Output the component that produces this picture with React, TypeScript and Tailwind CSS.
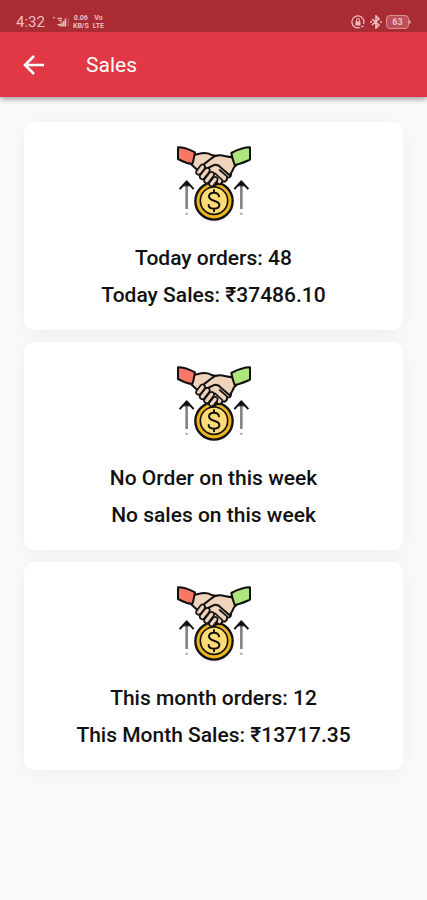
type Summary = {
  id: string;
  orders: string;
  sales: string;
};

const summaries: Summary[] = [
  { id: "today", orders: "Today orders: 48", sales: "Today Sales: ₹37486.10" },
  { id: "week", orders: "No Order on this week", sales: "No sales on this week" },
  { id: "month", orders: "This month orders: 12", sales: "This Month Sales: ₹13717.35" },
];

function DealIcon() {
  return (
    <svg
      viewBox="36 31 222 225"
      className="h-[75px] w-[74px]"
      fill="none"
      stroke="#111"
      strokeWidth="6"
      strokeLinecap="round"
      strokeLinejoin="round"
      aria-hidden="true"
    >
      {/* coin */}
      <circle cx="147" cy="196" r="56" fill="#eeb41e" strokeWidth="7" />
      <circle cx="147" cy="195" r="41" fill="#ffdc73" strokeWidth="5" />
      <path d="M162 182c-1-7-7-11-15-11-9 0-15 4-15 11 0 8 7 11 15 13s16 5 16 13c0 7-7 11-16 11s-16-4-16-11M147 164v7M147 219v8" strokeWidth="6" />
      {/* arrows */}
      <path d="M65 145v75M229 145v75" stroke="#858585" strokeWidth="8" strokeLinecap="butt" />
      <path d="M65 231v6M229 231v6" stroke="#aaa" strokeWidth="7" strokeLinecap="butt" />
      <path d="M46 158l19-21 19 21M210 158l19-21 19 21" strokeLinecap="square" />
      <path d="M54 150l11-13 11 13zM218 150l11-13 11 13z" fill="#111" strokeWidth="2" />
      {/* left hand */}
      <path d="M86 58c11-2 20-6 34-6 9 0 16 3 22 7l22 3 32 48c6 8 0 18-10 15 2 9-7 16-14 11 0 9-10 13-17 7-2 9-12 11-18 5L97 103 80 87z" fill="#efd3bb" />
      {/* right hand */}
      <path d="M201 64c-14 0-23-5-37-5-12 0-20 5-27 11l-17 13c-8 7-1 18 9 14l16-8c9-4 17 0 23 7l26 23c6-8 9-14 13-24l7-6z" fill="#efd3bb" />
      <path d="M187 123l-23-20M172 133l-22-20M157 140l-14-14" strokeWidth="5" />
      {/* fingers */}
      <path d="M95 105l11-15c7-8 19 0 12 10l-11 14c-7 8-18-1-12-9z" fill="#efd3bb" strokeWidth="5" />
      <path d="M106 118l14-18c7-8 19 0 12 10l-14 18c-7 8-18-2-12-10z" fill="#efd3bb" strokeWidth="5" />
      <path d="M119 130l14-18c7-8 19 0 12 10l-14 18c-7 8-18-2-12-10z" fill="#efd3bb" strokeWidth="5" />
      <path d="M134 140l10-13c7-8 18 0 12 9l-10 13c-7 8-18-1-12-9z" fill="#efd3bb" strokeWidth="5" />
      {/* cuffs */}
      <path d="M39 35c18 0 34 6 51 15-3 12-3 22-8 35-14 0-28-7-43-15z" fill="#fa7665" />
      <path d="M255 35c-20 0-37 7-56 17 2 12 5 22 10 36 15-2 30-9 46-16z" fill="#aee57d" />
    </svg>
  );
}

function StatusBar() {
  return (
    <div className="flex h-8 items-end justify-between bg-[#a92b34] px-4 pb-[2px] text-[#f0bfc0]">
      <div className="flex items-center gap-2">
        <span className="text-[15px] leading-4">4:32</span>
        <div className="flex items-center gap-1">
          <svg viewBox="0 0 18 14" className="h-[14px] w-4" fill="none" stroke="currentColor" aria-hidden="true">
            <path d="M0 2h2M5 3h5M6 5h4M8 7h2M5 10h3" strokeWidth="1.3" />
            <path d="M8 12V9M10 12V8M12 12V6M14 12V3" strokeWidth="1.7" />
            <path d="M17 3v9" opacity=".5" />
          </svg>
          <div className="flex flex-col items-center text-[7px] leading-[8px] font-bold">
            <span>0.06</span>
            <span>KB/S</span>
          </div>
          <div className="flex flex-col items-center text-[7px] leading-[8px] font-bold">
            <span>Vo</span>
            <span>LTE</span>
          </div>
        </div>
      </div>
      <div className="flex items-center gap-1 pb-px">
        <svg viewBox="0 0 14 14" className="mr-px size-[14px]" fill="none" stroke="currentColor" aria-hidden="true">
          <path d="M9 12.5A6 6 0 1 1 12.5 9" strokeWidth="1.3" />
          <rect x="4.5" y="6.5" width="5" height="4" fill="currentColor" stroke="none" />
          <path d="M5.5 7V5a1.5 1.5 0 0 1 3 0v2M10 12l3-1" />
        </svg>
        <svg viewBox="0 0 12 14" className="h-[14px] w-3" fill="none" stroke="currentColor" strokeWidth="1.6" aria-hidden="true">
          <path d="M2 4l7 6-3 3V1l3 3-7 6M0 7h2M10 7h2" />
        </svg>
        <div className="flex items-center">
          <span className="flex h-[14px] w-[23px] items-center justify-center rounded-[4px] border border-[#dc8e93] bg-[#bc5059] text-[9px] leading-none font-bold">
            63
          </span>
          <span className="h-1 w-[2px] rounded-r-sm bg-[#dc8e93]" />
        </div>
      </div>
    </div>
  );
}

function SummaryCard({ orders, sales }: Summary) {
  return (
    <section className="flex flex-col items-center rounded-[10px] bg-white px-4 pt-6 pb-4 shadow-[0_3px_22px_rgba(0,0,0,0.05)]">
      <DealIcon />
      <div className="mt-[19px] text-center text-[21px] leading-[37px] font-medium text-[#111]">
        <p>{orders}</p>
        <p>{sales}</p>
      </div>
    </section>
  );
}

export default function App() {
  return (
    <div className="min-h-screen bg-[#fafafa] font-[Roboto,'Noto_Sans',sans-serif]">
      <header className="relative bg-[#e23744] shadow-[0_2px_6px_rgba(0,0,0,0.4)]">
        <StatusBar />
        <div className="flex h-[65px] items-center gap-[41px] px-[23px] text-white">
          <button type="button" aria-label="Back">
            <svg viewBox="0 0 22 22" className="size-[22px]" fill="none" stroke="currentColor" strokeWidth="2.6" aria-hidden="true">
              <path d="M21 11H3M11 2l-9 9 9 9" />
            </svg>
          </button>
          <h1 className="text-[21px] leading-7">Sales</h1>
        </div>
      </header>

      <main className="flex flex-col gap-3 px-6 pt-[25px] pb-6">
        {summaries.map((s) => (
          <SummaryCard key={s.id} {...s} />
        ))}
      </main>
    </div>
  );
}
